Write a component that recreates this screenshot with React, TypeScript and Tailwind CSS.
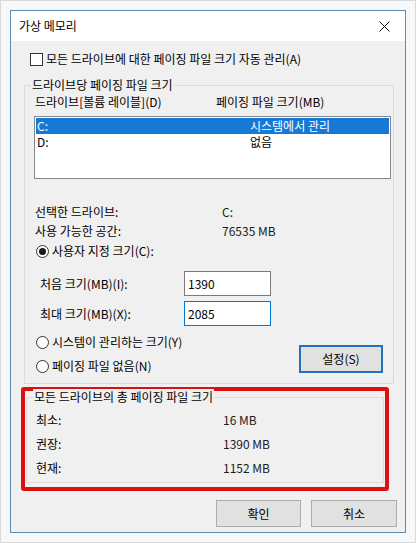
import { FC, ReactNode } from "react";

const font = "font-['Noto_Sans_CJK_KR','Noto_Sans',sans-serif]";

const GroupBox: FC<{ title: string; className: string; children: ReactNode }> = ({ title, className, children }) => (
  <div className={`relative border border-[#dcdcdc] ${className}`}>
    <span className="absolute -top-[9px] left-[6px] bg-[#f0f0f0] px-[1px] leading-[16px]">{title}</span>
    {children}
  </div>
);

const Radio: FC<{ checked?: boolean; label: string }> = ({ checked, label }) => (
  <div className="flex h-[16px] items-center gap-[3px]">
    <span className="flex h-[13px] w-[13px] items-center justify-center rounded-full border border-[#333333] bg-white">
      {checked && <span className="h-[7px] w-[7px] rounded-full bg-[#1a1a1a]" />}
    </span>
    <span className="leading-[16px]">{label}</span>
  </div>
);

const InfoRow: FC<{ label: string; value: string; valueCol: string }> = ({ label, value, valueCol }) => (
  <div className="flex h-[16px] items-center leading-[16px]">
    <span className={valueCol}>{label}</span>
    <span className="text-[#1b1b1b]">{value}</span>
  </div>
);

export default function App() {
  return (
    <div className={`h-[543px] w-[416px] border border-[#d9d9d9] bg-[#f8f8f8] pl-[9px] pt-[9px] text-[12px] text-black ${font}`}>
      <div className="flex h-[523px] w-[396px] flex-col border border-[#5b8cae] bg-[#f0f0f0]">
        {/* title bar */}
        <div className="flex h-[30px] items-center justify-between bg-white pl-[8px] pr-[14px]">
          <span className="leading-[16px]">가상 메모리</span>
          <svg width="11" height="11" viewBox="0 0 11 11" className="mr-[1px]">
            <path d="M0.5 0.5 L10.5 10.5 M10.5 0.5 L0.5 10.5" stroke="#111" strokeWidth="1" />
          </svg>
        </div>

        <div className="flex flex-1 flex-col">
          {/* auto manage checkbox */}
          <div className="ml-[19px] mt-[11px] flex h-[14px] items-center gap-[3px]">
            <span className="h-[13px] w-[13px] border border-[#333333] bg-white" />
            <span className="leading-[16px]">모든 드라이브에 대한 페이징 파일 크기 자동 관리(A)</span>
          </div>

          {/* per-drive group */}
          <GroupBox title="드라이브당 페이징 파일 크기" className="ml-[13px] mt-[19px] h-[299px] w-[370px]">
            <div className="ml-[9px] mt-[8px] flex h-[16px] items-center pl-[1px] leading-[16px]">
              <span className="w-[181px]">드라이브[볼륨 레이블](D)</span>
              <span>페이징 파일 크기(MB)</span>
            </div>
            <div className="ml-[9px] mt-[6px] h-[63px] w-[357px] border border-[#828790] bg-white p-[1px]">
              <div className="flex h-[16px] items-center bg-[#1779d6] text-white leading-[16px]">
                <span className="w-[214px] pl-[1px]">C:</span>
                <span>시스템에서 관리</span>
              </div>
              <div className="flex h-[16px] items-center leading-[16px]">
                <span className="w-[214px] pl-[1px]">D:</span>
                <span>없음</span>
              </div>
            </div>

            <div className="ml-[10px] mt-[25px]">
              <InfoRow label="선택한 드라이브:" value="C:" valueCol="w-[187px]" />
              <div className="mt-[3px]">
                <InfoRow label="사용 가능한 공간:" value="76535 MB" valueCol="w-[187px]" />
              </div>
            </div>

            <div className="ml-[11px] mt-[4px]">
              <Radio checked label="사용자 지정 크기(C):" />
            </div>

            <div className="ml-[15px] mt-[12px] flex items-center">
              <span className="w-[144px] leading-[16px]">처음 크기(MB)(I):</span>
              <div className="flex h-[25px] w-[87px] items-center border border-[#7a7a7a] bg-white pl-[3px]">1390</div>
            </div>
            <div className="ml-[15px] mt-[5px] flex items-center">
              <span className="w-[144px] leading-[16px]">최대 크기(MB)(X):</span>
              <div className="flex h-[25px] w-[87px] items-center border border-[#0078d7] bg-white pl-[3px]">2085</div>
            </div>

            <div className="ml-[11px] mr-[10px] mt-[8px] flex items-end justify-between">
              <div className="flex flex-col gap-[8px]">
                <Radio label="시스템이 관리하는 크기(Y)" />
                <Radio label="페이징 파일 없음(N)" />
              </div>
              <button className="mb-[1px] flex h-[28px] w-[84px] items-center justify-center border-2 border-[#2273b9] bg-[#e1e1e1] leading-[16px]">
                설정(S)
              </button>
            </div>
          </GroupBox>

          {/* totals group, outlined in red */}
          <div className="ml-[10px] mt-[3px] h-[104px] w-[368px] rounded-[3px] border-4 border-[#dc1010]">
            <GroupBox title="모든 드라이브의 총 페이징 파일 크기" className="mx-[1px] mt-[6px] h-[86px]">
              <div className="ml-[9px] mt-[14px] flex flex-col gap-[8px]">
                <InfoRow label="최소:" value="16 MB" valueCol="w-[187px]" />
                <InfoRow label="권장:" value="1390 MB" valueCol="w-[187px]" />
                <InfoRow label="현재:" value="1152 MB" valueCol="w-[187px]" />
              </div>
            </GroupBox>
          </div>

          {/* dialog buttons */}
          <div className="mt-[9px] flex justify-end gap-[10px] pr-[8px]">
            <button className="flex h-[27px] w-[85px] items-center justify-center border border-[#adadad] bg-[#e1e1e1] leading-[16px]">
              확인
            </button>
            <button className="flex h-[27px] w-[86px] items-center justify-center border border-[#adadad] bg-[#e1e1e1] leading-[16px]">
              취소
            </button>
          </div>
        </div>
      </div>
    </div>
  );
}
